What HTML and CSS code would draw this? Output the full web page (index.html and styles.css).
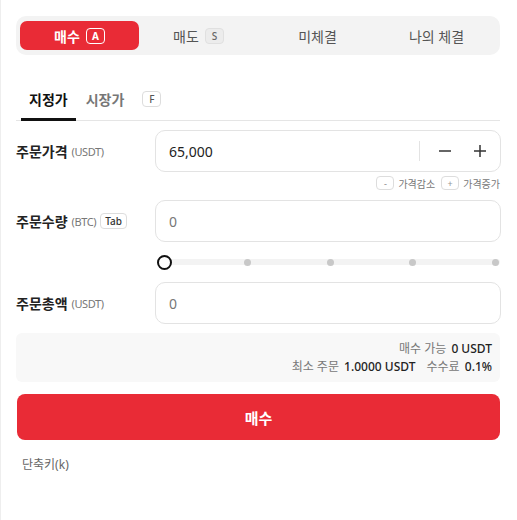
FILE: index.html
```html
<!DOCTYPE html>
<html lang="ko">
<head>
    <meta charset="UTF-8">
    <meta name="viewport" content="width=device-width, initial-scale=1.0">
    <link rel="stylesheet" href="styles.css">
    <title>주문</title>
</head>
<body>
    <div class="panel">
        <div class="side-tabs">
            <div class="side-tab active">매수 <span class="key">A</span></div>
            <div class="side-tab">매도 <span class="key">S</span></div>
            <div class="side-tab">미체결</div>
            <div class="side-tab">나의 체결</div>
        </div>

        <div class="type-tabs">
            <div class="type-tab active">지정가</div>
            <div class="type-tab">시장가</div>
            <span class="key small">F</span>
        </div>

        <div class="row">
            <div class="label">주문가격 <span class="unit">(USDT)</span></div>
            <div class="field">
                <span class="value">65,000</span>
                <span class="step-sep"></span>
                <span class="step">
                    <svg width="12" height="12" viewBox="0 0 12 12"><path d="M0 6h12" stroke="#333" stroke-width="1.5"/></svg>
                </span>
                <span class="step">
                    <svg width="12" height="12" viewBox="0 0 12 12"><path d="M0 6h12M6 0v12" stroke="#333" stroke-width="1.5"/></svg>
                </span>
            </div>
        </div>
        <div class="hints">
            <span class="key tiny">-</span> 가격감소
            <span class="key tiny">+</span> 가격증가
        </div>

        <div class="row">
            <div class="label">주문수량 <span class="unit">(BTC)</span> <span class="key tab">Tab</span></div>
            <div class="field"><span class="value muted">0</span></div>
        </div>

        <div class="slider-row">
            <div class="slider">
                <span class="knob"></span>
                <span class="dot"></span>
                <span class="dot"></span>
                <span class="dot"></span>
                <span class="dot"></span>
            </div>
        </div>

        <div class="row">
            <div class="label">주문총액 <span class="unit">(USDT)</span></div>
            <div class="field"><span class="value muted">0</span></div>
        </div>

        <div class="info">
            <div>매수 가능 <b>0 USDT</b></div>
            <div>최소 주문 <b>1.0000 USDT</b> <span class="gap"></span>수수료 <b>0.1%</b></div>
        </div>

        <button class="buy">매수</button>

        <div class="shortcut">단축키(k)</div>
    </div>
</body>
</html>
```

FILE: styles.css
```css
body {
    margin: 0;
    background: #fff;
    font-family: "Noto Sans", "Noto Sans CJK KR", sans-serif;
    color: #222;
    border-left: 1px solid #eeeeee;
    min-height: 520px;
    box-sizing: border-box;
}

.panel {
    width: 484px;
    box-sizing: border-box;
    padding: 16px 0 0;
    margin-left: 15px;
    display: flex;
    flex-direction: column;
}

.key {
    display: inline-flex;
    align-items: center;
    justify-content: center;
    min-width: 19px;
    height: 16px;
    box-sizing: border-box;
    border: 1px solid #dddddd;
    border-radius: 4px;
    font-size: 10px;
    font-weight: 500;
    color: #555;
    background: #fff;
    margin-left: 6px;
    line-height: 1;
}

.side-tabs {
    display: grid;
    grid-template-columns: repeat(4, 1fr);
    background: #f3f3f3;
    border-radius: 10px;
    padding: 5px 4px;
    height: 39px;
    box-sizing: border-box;
}

.side-tab {
    display: flex;
    align-items: center;
    justify-content: center;
    font-size: 14px;
    color: #555;
    border-radius: 7px;
}

.side-tab .key {
    background: #ececec;
    border-color: #e0e0e0;
    color: #666;
}

.side-tab.active {
    background: #e92b36;
    color: #fff;
    font-weight: 700;
}

.side-tab.active .key {
    background: transparent;
    border: 1.5px solid #fff;
    color: #fff;
    font-weight: 700;
}

.type-tabs {
    display: flex;
    align-items: center;
    margin-top: 29px;
    border-bottom: 1px solid #e5e5e5;
    height: 36px;
    padding-left: 5px;
}

.type-tab {
    height: 100%;
    display: flex;
    align-items: center;
    padding: 0 8px 5px;
    font-size: 14px;
    font-weight: 700;
    color: #777;
    box-sizing: border-box;
    margin-right: 2px;
    border-bottom: 3px solid transparent;
    margin-bottom: -1px;
}

.type-tab.active {
    color: #111;
    border-bottom-color: #111;
}

.type-tabs .key.small {
    margin-left: 8px;
    margin-top: -6px;
}

.row {
    display: flex;
    align-items: center;
    margin-top: 9px;
}

.row + .hints + .row {
    margin-top: 10px;
}

.label {
    width: 139px;
    font-size: 14px;
    font-weight: 700;
    color: #222;
    display: flex;
    align-items: center;
}

.unit {
    font-size: 11px;
    font-weight: 400;
    color: #777;
    margin-left: 4px;
    letter-spacing: -0.4px;
}

.label .key.tab {
    margin-left: 4px;
    font-size: 10px;
    color: #333;
    padding: 0 4px;
}

.field {
    flex: 1;
    height: 42px;
    box-sizing: border-box;
    border: 1px solid #e3e3e3;
    border-radius: 10px;
    display: flex;
    align-items: center;
    padding: 0 14px 0 13px;
    margin-right: -1px;
}

.value {
    flex: 1;
    font-size: 14px;
    color: #222;
}

.value.muted {
    color: #777;
}

.step-sep {
    width: 1px;
    height: 20px;
    background: #e3e3e3;
    margin-right: 19px;
}

.step {
    display: flex;
}

.step + .step {
    margin-left: 23px;
}

.hints {
    display: flex;
    align-items: center;
    justify-content: flex-end;
    font-size: 10px;
    color: #777;
    margin-top: 4px;
    height: 14px;
}

.hints .key.tiny {
    min-width: 18px;
    height: 14px;
    font-size: 9px;
    color: #999;
    margin: 0 4px 0 6px;
}

.slider-row {
    height: 40px;
    display: flex;
    align-items: center;
    padding-left: 145px;
}

.slider {
    flex: 1;
    height: 6px;
    background: #f3f3f3;
    border-radius: 3px;
    display: flex;
    align-items: center;
    justify-content: space-between;
    padding: 0 1px 0 0;
}

.knob {
    width: 15px;
    height: 15px;
    box-sizing: border-box;
    border: 2.5px solid #111;
    border-radius: 50%;
    background: #fff;
    margin: 0 -4px;
}

.dot {
    width: 7px;
    height: 7px;
    border-radius: 50%;
    background: #c8c8c8;
}

.slider-row + .row {
    margin-top: 0;
}

.info {
    margin-top: 9px;
    background: #f8f8f8;
    border-radius: 6px;
    height: 49px;
    box-sizing: border-box;
    padding: 7px 8px 0;
    text-align: right;
    font-size: 12px;
    line-height: 18px;
    color: #777;
}

.info b {
    color: #222;
    font-weight: 500;
    margin-left: 2px;
}

.info .gap {
    display: inline-block;
    width: 8px;
}

.buy {
    margin-top: 12px;
    margin-left: 1px;
    height: 46px;
    border: none;
    border-radius: 8px;
    background: #e92b36;
    color: #fff;
    font-family: inherit;
    font-size: 15px;
    font-weight: 700;
}

.shortcut {
    margin-top: 15px;
    padding-left: 6px;
    font-size: 12px;
    color: #666;
}
```
